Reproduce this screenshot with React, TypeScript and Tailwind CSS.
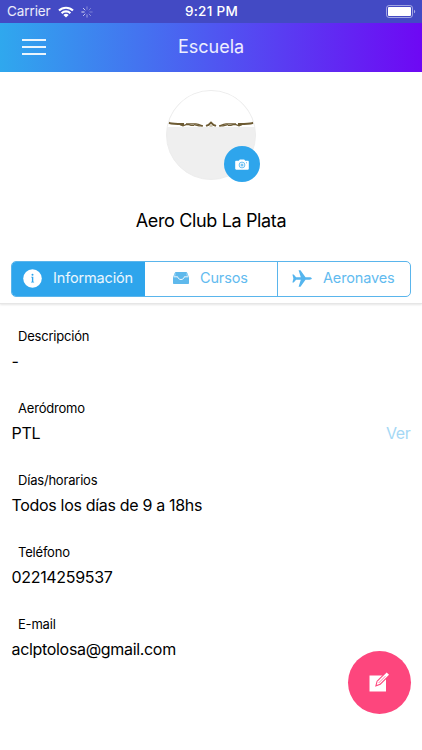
import React from 'react';

const WifiIcon = () => (
  <svg className="ml-[7px] h-[12px] w-[16px]" viewBox="0 0 16 12" fill="none" stroke="#fff" strokeWidth="2.1">
    <path d="M1 4.6a10 10 0 0 1 14 0" />
    <path d="M3.6 7.2a6.3 6.3 0 0 1 8.8 0" />
    <path d="M8 11.6 5.4 9a3.8 3.8 0 0 1 5.2 0z" fill="#fff" stroke="none" />
  </svg>
);

const SpinnerIcon = () => (
  <svg className="ml-[7px] h-[12px] w-[12px]" viewBox="0 0 12 12" stroke="#fff" strokeWidth="1" strokeLinecap="round">
    <path d="M6 .8v2.4" opacity=".35" />
    <path d="m9.7 2.3-1.7 1.7" opacity=".3" />
    <path d="M11.2 6H8.8" opacity=".3" />
    <path d="M9.7 9.7 8 8" opacity=".4" />
    <path d="M6 11.2V8.8" opacity=".5" />
    <path d="M2.3 9.7 4 8" opacity=".65" />
    <path d="M.8 6h2.4" opacity=".8" />
    <path d="M2.3 2.3 4 4" opacity=".7" />
  </svg>
);

const BatteryIcon = () => (
  <svg className="h-[13px] w-[30px]" viewBox="0 0 30 13">
    <rect x=".5" y=".5" width="26" height="12" rx="2.6" fill="none" stroke="#fff" strokeOpacity=".5" />
    <rect x="2" y="2" width="23" height="9" rx="1" fill="#fff" />
    <path d="M28 4.7c1.6.5 1.6 3.1 0 3.6z" fill="#fff" fillOpacity=".55" />
  </svg>
);

const WingsImage = () => (
  <svg className="block h-[6px] w-[88px]" viewBox="0 0 88 6" fill="none" stroke="#6d5b33">
    <path d="M1.500 1.600C3 3 5 3 11 3h6" strokeWidth="2" />
    <path d="M86.500 1.600C85 3 83 3 77 3h-6" strokeWidth="2" />
    <path d="M13 3.600l3 1.200 3-1.200h3l2 .8h3M75 3.600l-3 1.200-3-1.200h-3l-2 .8h-3" strokeWidth="1.200" />
    <path d="M19 2.800h10c2 0 3.500.8 6.500 2.200M69 2.800H59c-2 0-3.500.8-6.500 2.200" strokeWidth="1.300" />
    <path d="M27 3.600l5 1.300h4M61 3.600l-5 1.300h-4" strokeWidth="1.400" />
    <path d="m39 4.900 2.500-1L44 1.600l2.500 2.300 2.500 1" strokeWidth="2" />
    <path d="M42.500 5h3" stroke="#a0946e" />
  </svg>
);

const CameraIcon = () => (
  <svg className="h-[11px] w-[14px]" viewBox="0 0 14 11">
    <path d="M1.200 1.800h2.600L4.800.5h4.400l1 1.300h2.600c.6 0 1 .4 1 1v7c0 .5-.4.900-1 .900H1.200c-.6 0-1-.4-1-.9v-7c0-.6.400-1 1-1z" fill="#fff" />
    <circle cx="7" cy="6" r="2.900" fill="none" stroke="#2ea5ec" strokeWidth=".7" />
    <circle cx="7" cy="6" r="1.500" fill="#2ea5ec" opacity=".65" />
    <circle cx="11.500" cy="3.800" r=".5" fill="#2ea5ec" />
  </svg>
);

const InfoIcon = () => (
  <svg className="h-[19px] w-[19px]" viewBox="0 0 19 19">
    <circle cx="9.500" cy="9.500" r="9.300" fill="#fff" />
    <circle cx="9.500" cy="5.700" r="1" fill="#2ea5ec" />
    <path d="M8.200 7.800h2.100v5h.8v.8H8.100v-.8h.8V8.600h-.7z" fill="#2ea5ec" />
  </svg>
);

const TrayIcon = () => (
  <svg className="h-[12px] w-[16px]" viewBox="0 0 16 12">
    <path d="M3.200 0h9.600c.8 0 1.200.400 1.500 1.100L16 5.500V11c0 .6-.4 1-1 1H1c-.6 0-1-.4-1-1V5.500l1.700-4.400C2 .400 2.400 0 3.200 0z" fill="#5fb9ec" />
    <path d="M.8 4.800h3.900c.3 1.700 1.600 2.700 3.300 2.700s3-1 3.300-2.700h3.900" fill="none" stroke="#fff" strokeWidth=".9" />
    <path d="M2.300 1.500 1.600 4M13.700 1.500l.7 2.500" stroke="#c9e8fa" strokeWidth=".7" />
  </svg>
);

const PlaneIcon = () => (
  <svg className="h-[17px] w-[20px]" viewBox="0 0 20 17" fill="#55b5ee">
    <path d="M.4 4.500h1.300l2.400 2.700 4.700.1L6.600.2h1.900l5 7.100h3.900c1.500 0 2.400.6 2.400 1.200s-.9 1.200-2.400 1.200h-3.900l-5 7.100H6.600l2.200-7.100-4.700.1-2.400 2.700H.4l1-4z" />
  </svg>
);

const EditIcon = () => (
  <svg className="h-[22px] w-[22px]" viewBox="0 0 22 22">
    <path d="M1.500 4.500h16.500v16h-16.500z" fill="#fff" />
    <path d="m8.700 14 .9-3.500L18.700 1.400l2.300 2.300-9.100 9.100z" fill="#fff" stroke="#fd467d" strokeWidth="2.200" />
    <path d="m8.700 14 .9-3.500L18.700 1.400l2.300 2.300-9.100 9.100z" fill="#fff" />
    <path d="m10.600 12 6.800-6.800" stroke="#fd467d" strokeWidth=".7" />
  </svg>
);

const fields = [
  { label: 'Descripción', value: '-' },
  { label: 'Aeródromo', value: 'PTL', action: 'Ver' },
  { label: 'Días/horarios', value: 'Todos los días de 9 a 18hs' },
  { label: 'Teléfono', value: '02214259537' },
  { label: 'E-mail', value: 'aclptolosa@gmail.com' },
];

const App = () => {
  return (
    <div className="relative h-[750px] w-full overflow-hidden bg-white font-['Inter',sans-serif] text-black">
      <div className="grid h-[23px] grid-cols-[1fr_auto_1fr] items-center bg-[#434ac4] pr-[6px] pl-[7px] text-white">
        <div className="flex items-center">
          <span className="text-[13.500px] tracking-[-0.1px] text-white/90">Carrier</span>
          <WifiIcon />
          <SpinnerIcon />
        </div>
        <span className="text-[13.500px] font-medium tracking-[0.3px]">9:21 PM</span>
        <div className="flex justify-end">
          <BatteryIcon />
        </div>
      </div>

      <header className="grid h-[49px] grid-cols-[1fr_auto_1fr] items-center bg-linear-to-r/srgb from-[#2fa8ee] to-[#6e08f4] px-[22px] pb-[2px]">
        <button className="flex w-6 flex-col gap-[5px]">
          <span className="h-[2px] w-6 bg-white/90" />
          <span className="h-[2px] w-6 bg-white/90" />
          <span className="h-[2px] w-6 bg-white/90" />
        </button>
        <h1 className="text-[18px] text-white/90">Escuela</h1>
      </header>

      <section className="flex h-[232px] flex-col items-center border-b border-[#e6e6e6] px-[11px] pt-[18px] shadow-[0_1px_2px_rgba(0,0,0,0.1)]">
        <div className="relative">
          <div className="h-[90px] w-[90px] overflow-hidden rounded-full border border-[#ededed] bg-[#efefef]">
            <div className="flex h-[36px] items-end bg-white">
              <WingsImage />
            </div>
          </div>
          <button className="absolute -right-[4px] -bottom-[2px] flex h-9 w-9 items-center justify-center rounded-full bg-[#2ea5ec]">
            <CameraIcon />
          </button>
        </div>
        <h2 className="mt-[27px] text-[18px] leading-7 tracking-[-0.36px]">Aero Club La Plata</h2>

        <div className="mt-[26px] flex h-9 w-[400px] shrink-0 overflow-hidden rounded-[5px] border border-[#5ab5ec] text-[14.500px] tracking-[-0.15px] text-[#62bbef]">
          <button className="flex w-[133px] items-center bg-[#2ea5ec] pb-[2px] pl-[11px] text-white/90">
            <InfoIcon />
            <span className="ml-[11px]">Información</span>
          </button>
          <button className="flex w-[133px] items-center border-r border-[#5ab5ec] pb-[2px] pl-[28px]">
            <TrayIcon />
            <span className="ml-[11px]">Cursos</span>
          </button>
          <button className="flex flex-1 items-center pb-[2px] pl-[14px]">
            <PlaneIcon />
            <span className="ml-[11px]">Aeronaves</span>
          </button>
        </div>
      </section>

      <main className="px-[11.500px] pt-[22px]">
        {fields.map((field) => (
          <div key={field.label} className="h-[72px]">
            <div className="pl-[6.500px] text-[13px] leading-5 tracking-[-0.2px]">{field.label}</div>
            <div className="mt-[3px] flex justify-between text-[16px] leading-6 tracking-[-0.32px]">
              <span>{field.value}</span>
              {field.action && <button className="text-[#a5d8f5]">{field.action}</button>}
            </div>
          </div>
        ))}
      </main>

      <button className="absolute right-[11.500px] bottom-[36px] flex h-[63px] w-[63px] items-center justify-center rounded-full bg-[#fd467d] pb-[2px]">
        <EditIcon />
      </button>
    </div>
  );
};

export default App;
